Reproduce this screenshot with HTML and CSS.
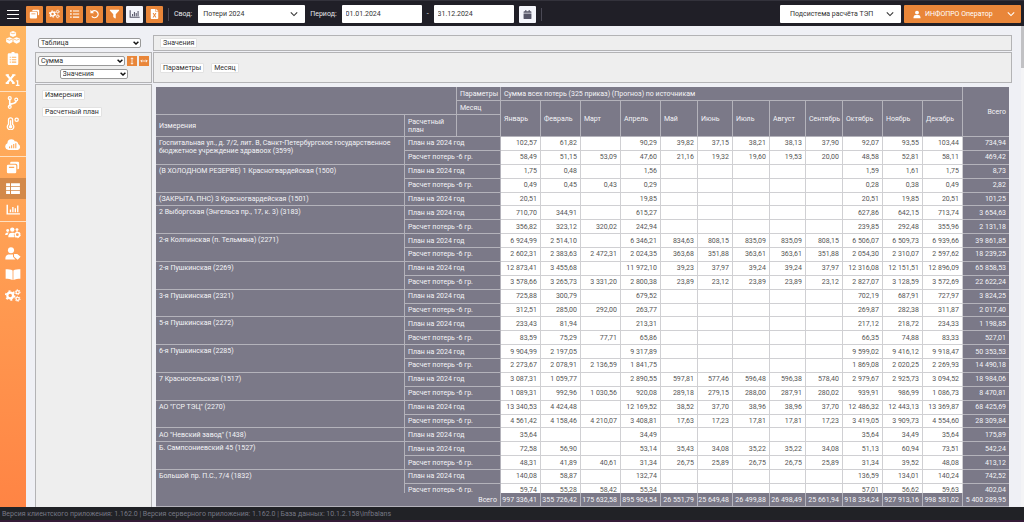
FILE: index.html
```html
<!DOCTYPE html>
<html lang="ru">
<head>
<meta charset="utf-8">
<title>Потери 2024</title>
<link rel="stylesheet" href="styles.css">
</head>
<body>
<svg class="defs" aria-hidden="true">
  <symbol id="i-copy" viewBox="0 0 16 16"><path d="M6 1h8a1.500 1.500 0 0 1 1.500 1.500v6A1.500 1.500 0 0 1 14 10h-.6V5.500A2 2 0 0 0 11.400 3.500H4.500v-1A1.500 1.500 0 0 1 6 1z"/><path fill-rule="evenodd" d="M2 4.500h8.500A1.500 1.500 0 0 1 12 6v7.500a1.500 1.500 0 0 1-1.500 1.500H2A1.500 1.500 0 0 1 .5 13.500V6A1.500 1.500 0 0 1 2 4.500zM3 7v1.500h6.500V7z"/></symbol>
  <symbol id="i-gears" viewBox="0 0 20 16"><circle cx="6.500" cy="8" r="3.600" fill="none" stroke="currentColor" stroke-width="2.800"/><circle cx="6.500" cy="8" r="5.600" fill="none" stroke="currentColor" stroke-width="2" stroke-dasharray="2.600 3.260"/><circle cx="15.800" cy="3.800" r="2" fill="none" stroke="currentColor" stroke-width="1.500"/><circle cx="15.800" cy="3.800" r="3.100" fill="none" stroke="currentColor" stroke-width="1.200" stroke-dasharray="1.600 1.640"/><circle cx="15.800" cy="12.200" r="2" fill="none" stroke="currentColor" stroke-width="1.500"/><circle cx="15.800" cy="12.200" r="3.100" fill="none" stroke="currentColor" stroke-width="1.200" stroke-dasharray="1.600 1.640"/></symbol>
  <symbol id="i-list" viewBox="0 0 16 16"><path d="M1 2h2.500v2.300H1zM5.500 2.300H15.500v1.700H5.500zM1 6.900h2.500v2.300H1zM5.500 7.200H15.500v1.700H5.500zM1 11.800h2.500v2.300H1zM5.500 12.100H15.500v1.700H5.500z"/></symbol>
  <symbol id="i-undo" viewBox="0 0 16 16"><path d="M1.500 1v5.800h5.800L5.300 4.900A4.500 4.500 0 1 1 4.600 11l-1.700 1.500A6.700 6.700 0 1 0 3.600 3.200z"/></symbol>
  <symbol id="i-filter" viewBox="0 0 16 16"><path d="M1.400 1.200h13.200c.8 0 1.200.9.600 1.500L10 8.200v6.300c0 .6-.6.9-1.100.6L6.400 13.300a1 1 0 0 1-.4-.8V8.200L.8 2.700c-.6-.6-.2-1.500.6-1.500z"/></symbol>
  <symbol id="i-chart" viewBox="0 0 18 16"><path d="M1 2h1.800v10.500H17.500v1.800H1zM5 8h1.700v3.500H5zM8 4.800h1.700v6.700H8zM11 6.500h1.700v5H11zM14 3h1.700v8.500H14z"/></symbol>
  <symbol id="i-excel" viewBox="0 0 14 16"><path fill-rule="evenodd" d="M2 0h6.500v4.500H13v10a1.500 1.500 0 0 1-1.500 1.500h-9A1.500 1.500 0 0 1 1 14.500V1a1 1 0 0 1 1-1zM9.500 0 13 3.500H9.500zM4 6.500 6 10l-2 3.500h1.700L7 11.200l1.300 2.300H10L8 10l2-3.500H8.300L7 8.800 5.700 6.500z"/></symbol>
  <symbol id="i-cal" viewBox="0 0 14 16"><path d="M3 0h2v2h4V0h2v2h1.500A1.500 1.500 0 0 1 14 3.500V5H0V3.500A1.500 1.500 0 0 1 1.500 2H3zM0 6h14v8.500a1.500 1.500 0 0 1-1.500 1.500h-11A1.500 1.500 0 0 1 0 14.500z"/></symbol>
  <symbol id="i-down" viewBox="0 0 12 8"><path d="M1.200 1.500 6 6.300l4.800-4.800" fill="none" stroke="currentColor" stroke-width="1.600"/></symbol>
  <symbol id="i-caret" viewBox="0 0 12 8"><path d="M1.200 1.500 6 6l4.800-4.500" fill="none" stroke="currentColor" stroke-width="3"/></symbol>
  <symbol id="i-user" viewBox="0 0 16 16"><circle cx="8" cy="4.200" r="3.900"/><path d="M1 15.500v-2a4.500 4.500 0 0 1 4.500-4.300h5A4.500 4.500 0 0 1 15 13.500v2z"/></symbol>
  <symbol id="i-cubes" viewBox="0 0 18 16"><path d="m9 0 3.800 1.600v4L9 7.300 5.200 5.600v-4zM4.600 7.600l3.900 1.700v4.300l-3.900 2-4-2V9.300zM13.400 7.600l4 1.700v4.300l-4 2-3.900-2V9.300z"/><path d="M5.800 2.200 9 3.500l3.200-1.300M1.200 9.900l3.400 1.400 3.300-1.400M10.100 9.900l3.300 1.400 3.400-1.400" fill="none" stroke="#ffb261" stroke-width=".9"/></symbol>
  <symbol id="i-clip" viewBox="0 0 14 16"><path fill-rule="evenodd" d="M5 1.500a2 2 0 0 1 4 0h3A1.500 1.500 0 0 1 13.500 3v11.500A1.500 1.500 0 0 1 12 16H2a1.500 1.500 0 0 1-1.500-1.500V3A1.500 1.500 0 0 1 2 1.500zM3 5.800v1.300h1.300V5.800zm2.500 0v1.300H11V5.800zM3 8.800v1.300h1.300V8.800zm2.500 0v1.300H11V8.800zM3 11.800v1.300h1.300v-1.300zm2.500 0v1.300H11v-1.300z"/></symbol>
  <symbol id="i-sub" viewBox="0 0 18 16"><path d="M1.500 2.500 10 12.500M10 2.500 1.500 12.500" fill="none" stroke="currentColor" stroke-width="2.600"/><path d="M0 1.500h4v2H0zM8 1.500h4v2H8zM0 11.500h4v2H0zM8 11.500h3v2H8zM13 9h2.500v5.500H17V16h-4.500v-1.500H14v-4h-1z"/></symbol>
  <symbol id="i-branch" viewBox="0 0 14 16"><path d="M3 3v10M11 5.500c0 3.500-3 3.500-8 4.800" fill="none" stroke="currentColor" stroke-width="2"/><circle cx="3" cy="2.700" r="1.800" fill="none" stroke="currentColor" stroke-width="1.500"/><circle cx="3" cy="13.300" r="1.800" fill="none" stroke="currentColor" stroke-width="1.500"/><circle cx="11" cy="4.300" r="1.800" fill="none" stroke="currentColor" stroke-width="1.500"/></symbol>
  <symbol id="i-temp" viewBox="0 0 16 16"><path d="M2.500 3.500a2.500 2.500 0 0 1 5 0v5.300a4 4 0 1 1-5 0z" fill="none" stroke="currentColor" stroke-width="1.600"/><circle cx="5" cy="12" r="2.200"/><path d="M4.200 4h1.600v8H4.200z"/><circle cx="12.500" cy="3.500" r="2" fill="none" stroke="currentColor" stroke-width="1.600"/></symbol>
  <symbol id="i-cloud" viewBox="0 0 20 16"><path fill-rule="evenodd" d="M4.500 15A4.500 4.500 0 0 1 3 6.400 5 5 0 0 1 8 1.500c2 0 3.600 1 4.400 2.600A3.400 3.400 0 0 1 16.500 7.500 4 4 0 0 1 16 15zM5 10.500v2.300h1.400v-2.300zm2.600-1.600v3.900H9V8.900zM10.200 7.500v5.300h1.400V7.500zm2.600-1v6.300h1.400V6.500z"/></symbol>
  <symbol id="i-table" viewBox="0 0 18 16"><path d="M.5 1.500h4.800v3.700H.5zM6.500 1.500h11v3.700h-11zM.5 6.300h4.800v3.700H.5zM6.500 6.300h11v3.700h-11zM.5 11.100h4.800v3.700H.5zM6.500 11.100h11v3.700h-11z"/></symbol>
  <symbol id="i-users" viewBox="0 0 22 16"><circle cx="10" cy="4" r="3"/><circle cx="3.700" cy="5.300" r="2"/><circle cx="16.500" cy="4" r="2"/><path d="M4.500 14.500c0-4 1.500-6 5.500-6 1.200 0 2 .2 2.700.6a5 5 0 0 0 .3 5.400zM.2 11.500c0-2.500 1-3.600 3.500-3.600.8 0 1 .1 1.500.3-1 1-1.600 2-1.700 3.300z"/><circle cx="17" cy="11" r="2.900" fill="none" stroke="currentColor" stroke-width="2"/><circle cx="17" cy="11" r="4.200" fill="none" stroke="currentColor" stroke-width="1.200" stroke-dasharray="2.200 2.200"/></symbol>
  <symbol id="i-usertag" viewBox="0 0 20 16"><circle cx="7.500" cy="4" r="3.800"/><path d="M.5 15.500v-1.800C.5 11 2.500 9.200 5 9.200h5v3l3 3.300zM11.300 8.500h4L19.500 12l-3.700 3.700-4.500-3.700z"/></symbol>
  <symbol id="i-book" viewBox="0 0 20 16"><path d="M9.500 3v12C7 13.500 4 13.200.8 13.200V1.500C4 1.500 7.500 1.700 9.500 3zM10.500 3v12c2.500-1.500 5.500-1.800 8.700-1.800V1.500c-3.200 0-6.700.2-8.700 1.500z"/></symbol>
</svg>

<header class="topbar">
  <button class="menu" aria-label="Меню"><span></span><span></span><span></span></button>
  <div class="tools">
    <button class="tool" aria-label="Копировать"><svg><use href="#i-copy"/></svg></button>
    <button class="tool" aria-label="Настройки"><svg><use href="#i-gears"/></svg></button>
    <button class="tool" aria-label="Список"><svg><use href="#i-list"/></svg></button>
    <button class="tool" aria-label="Отменить"><svg><use href="#i-undo"/></svg></button>
    <button class="tool" aria-label="Фильтр"><svg><use href="#i-filter"/></svg></button>
    <button class="tool light" aria-label="График"><svg><use href="#i-chart"/></svg></button>
    <button class="tool" aria-label="Экспорт"><svg><use href="#i-excel"/></svg></button>
  </div>
  <i class="sep"></i>
  <label for="svod">Свод:</label>
  <span class="pick svod"><select id="svod"><option>Потери 2024</option></select><svg><use href="#i-down"/></svg></span>
  <label for="from">Период:</label>
  <input class="date" id="from" value="01.01.2024">
  <span class="dash">-</span>
  <input class="date" id="to" aria-label="Конец периода" value="31.12.2024">
  <button class="tool light cal" aria-label="Календарь"><svg><use href="#i-cal"/></svg></button>
  <i class="sep"></i>
  <span class="pick system"><select aria-label="Подсистема"><option>Подсистема расчёта ТЭП</option></select><svg><use href="#i-down"/></svg></span>
  <button class="account"><svg><use href="#i-user"/></svg><span>ИНФОПРО Оператор</span><svg class="chev"><use href="#i-down"/></svg></button>
</header>

<div class="shell">
  <nav class="side">
    <div class="group">
      <a href="#" aria-label="Объекты"><svg><use href="#i-cubes"/></svg></a>
      <a href="#" aria-label="Задания"><svg><use href="#i-clip"/></svg></a>
      <a href="#" aria-label="Переменные"><svg><use href="#i-sub"/></svg></a>
    </div>
    <div class="group">
      <a href="#" aria-label="Схема"><svg><use href="#i-branch"/></svg></a>
      <a href="#" aria-label="Температура"><svg><use href="#i-temp"/></svg></a>
      <a href="#" aria-label="Облако"><svg><use href="#i-cloud"/></svg></a>
    </div>
    <div class="group">
      <a href="#" aria-label="Документы"><svg><use href="#i-copy"/></svg></a>
      <a href="#" class="active" aria-label="Таблица"><svg><use href="#i-table"/></svg></a>
      <a href="#" aria-label="Графики"><svg><use href="#i-chart"/></svg></a>
    </div>
    <div class="group">
      <a href="#" aria-label="Группы"><svg><use href="#i-users"/></svg></a>
      <a href="#" aria-label="Роли"><svg><use href="#i-usertag"/></svg></a>
      <a href="#" aria-label="Справочник"><svg><use href="#i-book"/></svg></a>
      <a href="#" aria-label="Параметры системы"><svg><use href="#i-gears"/></svg></a>
    </div>
  </nav>

  <main class="pivot">
    <div class="view"><span class="pick small"><select aria-label="Вид"><option>Таблица</option></select><svg><use href="#i-caret"/></svg></span></div>
    <div class="zone values"><button class="chip">Значения</button></div>
    <div class="zone agg">
      <div class="aggrow">
        <span class="pick small"><select aria-label="Агрегат"><option>Сумма</option></select><svg><use href="#i-caret"/></svg></span>
        <button class="dir" aria-label="По вертикали"><svg viewBox="0 0 10 10"><path d="M5 1v8M3.400 2.600 5 1l1.600 1.600M3.400 7.400 5 9l1.600-1.600"/></svg></button>
        <button class="dir" aria-label="По горизонтали"><svg viewBox="0 0 10 10"><path d="M1 5h8M2.600 3.400 1 5l1.600 1.600M7.400 3.400 9 5 7.400 6.600"/></svg></button>
      </div>
      <span class="pick small field"><select aria-label="Поле"><option>Значения</option></select><svg><use href="#i-caret"/></svg></span>
    </div>
    <div class="zone params"><button class="chip">Параметры</button><button class="chip">Месяц</button></div>
    <div class="zone rows"><button class="chip">Измерения</button><button class="chip">Расчетный план</button></div>
    <div class="scroll">
      <table>
        <colgroup><col><col class="w52"><col class="w44"><col class="w40"><col class="w40"><col class="w40"><col class="w40"><col class="w37"><col class="w35"><col class="w37"><col class="w36"><col class="w37"><col class="w40"><col class="w40"><col class="w40"><col class="w46"></colgroup>
        <thead>
          <tr><th colspan="2" rowspan="2"></th><th>Параметры</th><th colspan="12">Сумма всех потерь (325 приказ) (Прогноз) по источникам</th><th rowspan="3" class="sum">Всего</th></tr>
          <tr><th>Месяц</th><th rowspan="2">Январь</th><th rowspan="2">Февраль</th><th rowspan="2">Март</th><th rowspan="2">Апрель</th><th rowspan="2">Май</th><th rowspan="2">Июнь</th><th rowspan="2">Июль</th><th rowspan="2">Август</th><th rowspan="2">Сентябрь</th><th rowspan="2">Октябрь</th><th rowspan="2">Ноябрь</th><th rowspan="2">Декабрь</th></tr>
          <tr class="dims"><th>Измерения</th><th>Расчетный план</th><th></th></tr>
        </thead>
        <tbody>
          <tr><th rowspan="2">Госпитальная ул., д. 7/2, лит. В, Санкт-Петербургское государственное бюджетное учреждение здравоох (3599)<th colspan="2">План на 2024 год<td>102,57<td>61,82<td><td>90,29<td>39,82<td>37,15<td>38,21<td>38,13<td>37,90<td>92,07<td>93,55<td>103,44<td>734,94
          <tr><th colspan="2">Расчет потерь -6 гр.<td>58,49<td>51,15<td>53,09<td>47,60<td>21,16<td>19,32<td>19,60<td>19,53<td>20,00<td>48,58<td>52,81<td>58,11<td>469,42
          <tr><th rowspan="2">(В ХОЛОДНОМ РЕЗЕРВЕ) 1 Красногвардейская (1500)<th colspan="2">План на 2024 год<td>1,75<td>0,48<td><td>1,56<td><td><td><td><td><td>1,59<td>1,61<td>1,75<td>8,73
          <tr><th colspan="2">Расчет потерь -6 гр.<td>0,49<td>0,45<td>0,43<td>0,29<td><td><td><td><td><td>0,28<td>0,38<td>0,49<td>2,82
          <tr><th>(ЗАКРЫТА, ПНС) 3 Красногвардейская (1501)<th colspan="2">План на 2024 год<td>20,51<td><td><td>19,85<td><td><td><td><td><td>20,51<td>19,85<td>20,51<td>101,25
          <tr><th rowspan="2">2 Выборгская (Энгельса пр., 17, к. 3) (3183)<th colspan="2">План на 2024 год<td>710,70<td>344,91<td><td>615,27<td><td><td><td><td><td>627,86<td>642,15<td>713,74<td>3 654,63
          <tr><th colspan="2">Расчет потерь -6 гр.<td>356,82<td>323,12<td>320,02<td>242,94<td><td><td><td><td><td>239,85<td>292,48<td>355,96<td>2 131,18
          <tr><th rowspan="2">2-я Колпинская (п. Тельмана) (2271)<th colspan="2">План на 2024 год<td>6 924,99<td>2 514,10<td><td>6 346,21<td>834,63<td>808,15<td>835,09<td>835,09<td>808,15<td>6 506,07<td>6 509,73<td>6 939,66<td>39 861,85
          <tr><th colspan="2">Расчет потерь -6 гр.<td>2 602,31<td>2 383,63<td>2 472,31<td>2 024,35<td>363,68<td>351,88<td>363,61<td>363,61<td>351,88<td>2 054,30<td>2 310,07<td>2 597,62<td>18 239,25
          <tr><th rowspan="2">2-я Пушкинская (2269)<th colspan="2">План на 2024 год<td>12 873,41<td>3 455,68<td><td>11 972,10<td>39,23<td>37,97<td>39,24<td>39,24<td>37,97<td>12 316,08<td>12 151,51<td>12 896,09<td>65 858,53
          <tr><th colspan="2">Расчет потерь -6 гр.<td>3 578,66<td>3 265,73<td>3 331,20<td>2 800,38<td>23,89<td>23,12<td>23,89<td>23,89<td>23,12<td>2 827,07<td>3 128,59<td>3 572,69<td>22 622,24
          <tr><th rowspan="2">3-я Пушкинская (2321)<th colspan="2">План на 2024 год<td>725,88<td>300,79<td><td>679,52<td><td><td><td><td><td>702,19<td>687,91<td>727,97<td>3 824,25
          <tr><th colspan="2">Расчет потерь -6 гр.<td>312,51<td>285,00<td>292,00<td>263,77<td><td><td><td><td><td>269,87<td>282,38<td>311,87<td>2 017,40
          <tr><th rowspan="2">5-я Пушкинская (2272)<th colspan="2">План на 2024 год<td>233,43<td>81,94<td><td>213,31<td><td><td><td><td><td>217,12<td>218,72<td>234,33<td>1 198,85
          <tr><th colspan="2">Расчет потерь -6 гр.<td>83,59<td>75,29<td>77,71<td>65,86<td><td><td><td><td><td>66,35<td>74,88<td>83,33<td>527,01
          <tr><th rowspan="2">6-я Пушкинская (2285)<th colspan="2">План на 2024 год<td>9 904,99<td>2 197,05<td><td>9 317,89<td><td><td><td><td><td>9 599,02<td>9 416,12<td>9 918,47<td>50 353,53
          <tr><th colspan="2">Расчет потерь -6 гр.<td>2 273,67<td>2 078,91<td>2 136,59<td>1 841,75<td><td><td><td><td><td>1 869,08<td>2 020,25<td>2 269,93<td>14 490,18
          <tr><th rowspan="2">7 Красносельская (1517)<th colspan="2">План на 2024 год<td>3 087,31<td>1 059,77<td><td>2 890,55<td>597,81<td>577,46<td>596,48<td>596,38<td>578,40<td>2 979,67<td>2 925,73<td>3 094,52<td>18 984,06
          <tr><th colspan="2">Расчет потерь -6 гр.<td>1 089,31<td>992,96<td>1 030,56<td>920,08<td>289,18<td>279,15<td>288,00<td>287,91<td>280,02<td>939,91<td>986,99<td>1 086,73<td>8 470,81
          <tr><th rowspan="2">АО "ГСР ТЭЦ" (2270)<th colspan="2">План на 2024 год<td>13 340,53<td>4 424,48<td><td>12 169,52<td>38,52<td>37,70<td>38,96<td>38,96<td>37,70<td>12 486,32<td>12 443,13<td>13 369,87<td>68 425,69
          <tr><th colspan="2">Расчет потерь -6 гр.<td>4 561,42<td>4 158,46<td>4 210,07<td>3 408,81<td>17,63<td>17,23<td>17,81<td>17,81<td>17,23<td>3 419,05<td>3 909,73<td>4 554,60<td>28 309,84
          <tr><th>АО "Невский завод" (1438)<th colspan="2">План на 2024 год<td>35,64<td><td><td>34,49<td><td><td><td><td><td>35,64<td>34,49<td>35,64<td>175,89
          <tr><th rowspan="2">Б. Сампсониевский 45 (1527)<th colspan="2">План на 2024 год<td>72,58<td>56,90<td><td>53,14<td>35,43<td>34,08<td>35,22<td>35,22<td>34,08<td>51,13<td>60,94<td>73,51<td>542,24
          <tr><th colspan="2">Расчет потерь -6 гр.<td>48,31<td>41,89<td>40,61<td>31,34<td>26,75<td>25,89<td>26,75<td>26,75<td>25,89<td>31,34<td>39,52<td>48,08<td>413,12
          <tr><th rowspan="2">Большой пр. П.С., 7/4 (1832)<th colspan="2">План на 2024 год<td>140,08<td>58,87<td><td>132,74<td><td><td><td><td><td>136,59<td>134,01<td>140,24<td>742,52
          <tr><th colspan="2">Расчет потерь -6 гр.<td>59,74<td>55,28<td>58,42<td>55,34<td><td><td><td><td><td>57,01<td>56,62<td>59,63<td>402,04
        </tbody>
        <tfoot>
          <tr><th colspan="3" class="sum">Всего<td>997 336,41<td>355 726,42<td>175 632,58<td>895 904,54<td>26 551,79<td>25 649,48<td>26 499,88<td>26 498,49<td>25 661,94<td>918 334,24<td>927 913,16<td>998 581,02<td>5 400 289,95
        </tfoot>
      </table>
    </div>
  </main>
  <div class="track"><span class="thumb"></span></div>
</div>
<footer class="status">Версия клиентского приложения: 1.162.0 | Версия серверного приложения: 1.162.0 | База данных: 10.1.2.158\infbalans</footer>
</body>
</html>
```

FILE: styles.css
```css
* { box-sizing: border-box; }
body {
  margin: 0;
  height: 100vh;
  display: flex;
  flex-direction: column;
  overflow: hidden;
  font: 7px/8px Roboto, "Noto Sans", sans-serif;
  color: #333;
  background: #eff0f5;
}
button, input, select { font: inherit; color: inherit; margin: 0; border: 0; padding: 0; }
svg { display: block; fill: currentColor; }
.defs { position: absolute; width: 0; height: 0; }

.topbar {
  flex: none;
  display: flex;
  align-items: center;
  height: 26px;
  padding: 1px 3px 0 7px;
  background: #201f27;
  border-top: 1px solid #33323b;
  color: #e6e6ea;
}
.menu { display: flex; flex-direction: column; gap: 3px; width: 12px; margin-right: 7px; background: none; }
.menu span { height: 1px; background: #fff; }
.tools { display: flex; gap: 3px; }
.tool {
  display: grid;
  place-items: center;
  width: 17px;
  height: 17px;
  border-radius: 1px;
  background: #e98639;
  color: #fff;
}
.tool svg { width: 11px; height: 10px; }
.tool.light { background: #f4f5fb; color: #555568; }
.sep { width: 1px; height: 13px; margin: 0 5px; background: #4a4955; }
.pick { position: relative; display: block; color: #333; }
.pick select { display: block; width: 100%; height: 100%; appearance: none; background: #fff; border-radius: 1px; }
.pick svg { position: absolute; right: 7px; top: 50%; width: 8px; height: 6px; margin-top: -3px; pointer-events: none; }
.pick.svod { width: 107px; height: 18px; margin: 0 5px 0 6px; }
.svod select { padding-left: 5px; }
.date { width: 80px; height: 18px; margin-left: 5px; padding: 0 4px; border-radius: 1px; background: #fff; color: #333; }
.dash { width: 7px; text-align: right; }
.tool.cal { margin-left: 5px; }
.cal svg { height: 9px; }
.pick.system { width: 121px; height: 18px; margin-left: auto; margin-right: 3px; }
.system select { padding-left: 10px; }
.account {
  display: flex;
  align-items: center;
  width: 117px;
  height: 18px;
  padding: 0 6px 0 9px;
  border-radius: 1px;
  background: #e98639;
  color: #fff;
}
.account svg { width: 8px; height: 9px; margin-right: 4px; }
.account .chev { width: 8px; height: 6px; margin: 0 0 0 auto; }

.shell { flex: 1; min-height: 0; display: flex; }
.side { flex: none; width: 26px; padding-top: 1px; background: linear-gradient(#ffb661, #ff8444); color: #fff; }
.group { padding-bottom: 1px; border-bottom: 1px solid #ffe0c0; }
.group:last-child { border-bottom: 0; }
.side a { display: grid; place-items: center; height: 21px; color: #fff; }
.side a.active { background: #d3894a; }
.side svg { width: 16px; height: 13px; }

.pivot {
  flex: 1;
  min-width: 0;
  display: grid;
  grid-template-columns: 117px minmax(0, 1fr);
  grid-template-rows: 16px 31px minmax(0, 1fr);
  gap: 1px;
  padding: 9px 9px 0;
}
.zone { border: 1px solid #b3b3b5; background: #eee; }
.chip {
  height: 10px;
  padding: 0 2px;
  border: 1px solid #e2e2e2;
  border-radius: 1px;
  background: #fff;
  line-height: 8px;
}
.pick.small { height: 10px; }
.small select { padding-left: 2px; border: 1px solid #999; border-radius: 2px; }
.small svg { right: 2px; width: 6px; height: 4px; margin-top: -2px; color: #111; }
.view { padding: 3px 11px 0 3px; }
.values, .params { display: flex; align-items: center; gap: 7px; padding: 0 6px; }
.agg { display: flex; flex-direction: column; align-items: center; gap: 3px; padding: 3px 2px; }
.aggrow { display: flex; gap: 2px; width: 100%; }
.aggrow .pick { flex: 1; }
.field { width: 68px; }
.dir { width: 10px; height: 10px; padding: 1px; background: #e98639; color: #fff; }
.dir path { fill: none; stroke: currentColor; stroke-width: 1; }
.zone.rows { display: flex; flex-direction: column; align-items: flex-start; gap: 7px; padding: 5px 6px; border-bottom: 0; }

.scroll { min-height: 0; overflow: hidden; margin: 3px 3px 0; }
table { width: 100%; height: 425px; table-layout: fixed; border-collapse: separate; border-spacing: 0; background: #7b7988; }
thead tr { height: 14px; }
thead .dims { height: 22px; }
tfoot tr { height: 14px; }
.w35 { width: 35px; }
.w36 { width: 36px; }
.w37 { width: 37px; }
.w40 { width: 40px; }
.w44 { width: 44px; }
.w46 { width: 46px; }
.w52 { width: 52px; }
th, td { padding: 2px 3px; border: 0 solid #b4b3bb; border-width: 0 1px 1px 0; line-height: 8px; font-weight: 400; }
th { text-align: left; color: #f4f4f7; white-space: nowrap; }
.dims th { white-space: normal; }
tbody th:first-child[rowspan] { vertical-align: top; white-space: normal; }
td { text-align: right; background: #fff; color: #555; border-color: #d0d0d3; white-space: nowrap; }
td:last-child, tfoot td { background: #7b7988; color: #f4f4f7; border-color: #b4b3bb; }
tr > :last-child { border-right: 0; }
thead tr + tr > :last-child, tbody th[colspan] { border-right: 1px solid #b4b3bb; }
th.sum { text-align: right; }
tfoot { position: sticky; bottom: 0; }
tfoot tr > * { background: #7b7988; }
tfoot td { padding-left: 0; }

.track { flex: none; width: 3px; background: #f4f4f6; }
.thumb { display: block; height: 42px; background: #c1c1c4; }

.status { flex: none; height: 15px; padding: 3px 2px; background: #212226; border-bottom: 2px solid #351b38; color: #777885; }
```
